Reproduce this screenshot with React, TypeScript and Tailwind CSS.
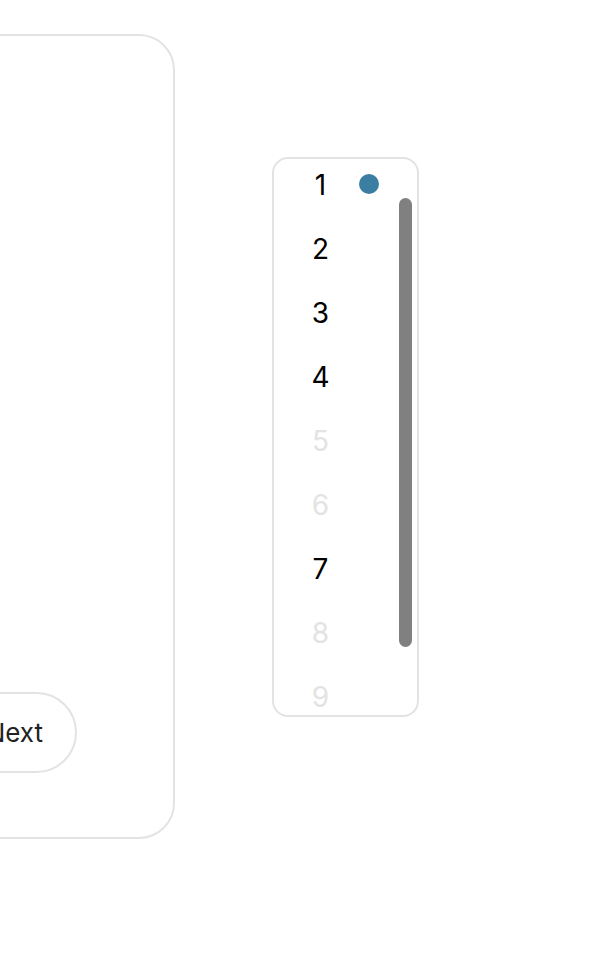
export default function App() {
  const items = [
    { n: 1, on: true },
    { n: 2, on: true },
    { n: 3, on: true },
    { n: 4, on: true },
    { n: 5, on: false },
    { n: 6, on: false },
    { n: 7, on: true },
    { n: 8, on: false },
    { n: 9, on: false },
  ];

  return (
    <div className="w-[616px] h-[968px] bg-white overflow-hidden flex items-start font-['Inter',sans-serif]">
      {/* card cut off at the left edge */}
      <div className="shrink-0 ml-[-400px] mt-[34px] w-[575px] h-[805px] border-2 border-[#e3e3e3] rounded-[36px] flex flex-col justify-end items-end pr-[96px] pb-[64px]">
        <button className="h-[81px] pl-[40px] pr-[32px] rounded-full border-2 border-[#e3e3e3] text-[26px] text-[#222]">
          Next
        </button>
      </div>

      {/* number list */}
      <div className="shrink-0 ml-[97px] mt-[157px] w-[147px] h-[560px] border-2 border-[#e3e3e3] rounded-[16px] overflow-hidden relative">
        {items.map((it) => (
          <div key={it.n} className="h-16 flex items-start">
            <span
              className={
                "w-[93px] text-center text-[28px] leading-[52px] " +
                (it.on ? "text-black" : "text-[#e3e3e3]")
              }
            >
              {it.n}
            </span>
          </div>
        ))}
        <span className="absolute left-[85px] top-[15px] w-5 h-5 rounded-full bg-[#3a7ea1]" />
        <span className="absolute left-[125px] top-[39px] w-[13px] h-[449px] rounded-full bg-[#808080]" />
      </div>
    </div>
  );
}
